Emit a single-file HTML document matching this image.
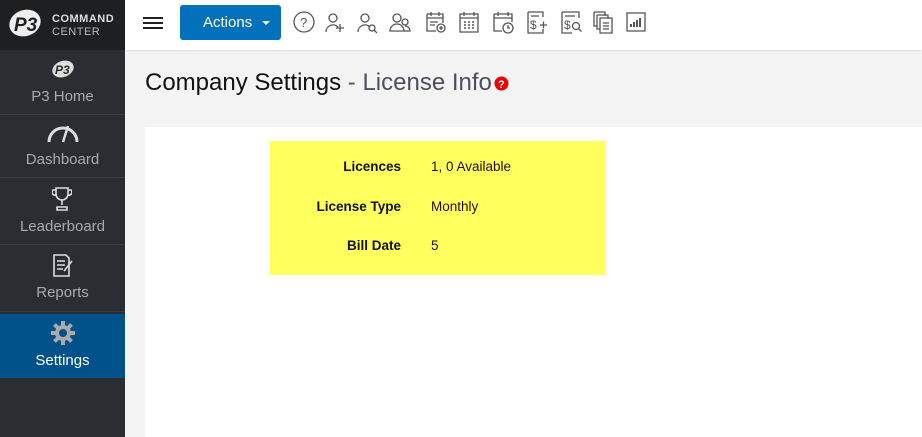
<!DOCTYPE html>
<html><head><meta charset="utf-8"><style>
*{margin:0;padding:0;box-sizing:border-box}
body{width:922px;height:437px;overflow:hidden;font-family:"Liberation Sans",sans-serif;background:#f4f4f4;position:relative}
.logo{position:absolute;left:0;top:0;width:125px;height:50px;background:#1e1f21}
.side{position:absolute;left:0;top:50px;width:125px;height:387px;background:#2a2d31}
.item{position:absolute;left:0;width:125px;text-align:center;color:#a9abad;font-size:15px;border-bottom:1px solid #3a3d41}
.item span{position:absolute;left:0;width:125px;text-align:center}
.top{position:absolute;left:125px;top:0;width:797px;height:50px;background:#fff;box-shadow:0 1px 2px rgba(0,0,0,.08)}
.btn{position:absolute;left:180px;top:5px;width:101px;height:35px;background:#0270bb;border-radius:3px;color:#fff;font-size:15px;line-height:35px;padding-left:23px}
.panel{position:absolute;left:145px;top:127px;width:777px;height:310px;background:#fff}
.yb{position:absolute;left:270px;top:141px;width:336px;height:134px;background:#ffff5e;font-size:13.5px;color:#111}
.lab{position:absolute;right:205px;font-weight:bold;text-align:right}
.val{position:absolute;left:161px;color:#2a0a18}
</style></head><body>
<div class="logo">
<svg width="125" height="50" style="position:absolute;left:0;top:0">
<ellipse cx="25" cy="23" rx="16" ry="13" fill="#eee" transform="rotate(-20 25 23)"/>
<text x="14" y="31" font-size="19" font-style="italic" font-weight="bold" fill="#1e1f21" font-family="Liberation Sans">P3</text>
<text x="52" y="22" font-size="11" font-weight="bold" fill="#ddd" font-family="Liberation Sans" letter-spacing="0.5">COMMAND</text>
<text x="52" y="35" font-size="11" fill="#bbb" font-family="Liberation Sans" letter-spacing="0.5">CENTER</text>
</svg></div>
<div class="side">
<div class="item" style="top:0;height:65px">
<svg width="24" height="20" style="position:absolute;left:51px;top:9px"><ellipse cx="12" cy="10" rx="11" ry="8" fill="#ddd" transform="rotate(-20 12 10)"/><text x="4" y="15" font-size="12" font-style="italic" font-weight="bold" fill="#2a2d31">P3</text></svg>
<span style="top:38px">P3 Home</span></div>
<div class="item" style="top:65px;height:63px">
<svg width="34" height="22" style="position:absolute;left:46px;top:7px" fill="none" stroke="#ddd" stroke-width="3"><path d="M3 20 A14 14 0 0 1 31 20"/><path d="M17 20 L22 4" stroke-width="2.5"/></svg>
<span style="top:36px">Dashboard</span></div>
<div class="item" style="top:128px;height:67px">
<svg width="20" height="26" style="position:absolute;left:52px;top:8px" fill="none" stroke="#ddd" stroke-width="1.6"><path d="M4 2h12v6a6 6 0 0 1-12 0z M4 4H1a3 3 0 0 0 3 5 M16 4h3a3 3 0 0 1-3 5 M10 14v5 M5 24h10v-3H5z"/></svg>
<span style="top:40px">Leaderboard</span></div>
<div class="item" style="top:195px;height:67px">
<svg width="24" height="26" style="position:absolute;left:51px;top:8px" fill="none" stroke="#ddd" stroke-width="1.6"><path d="M3 2h12l3 3v18H3z M6 8h8 M6 12h8 M6 16h6 M13 18l8-10"/></svg>
<span style="top:39px">Reports</span></div>
<div style="position:absolute;top:264px;left:0;width:125px;height:64px;background:#01528a;color:#fff;font-size:15px;text-align:center">
<svg width="26" height="26" viewBox="0 0 26 26" style="position:absolute;left:50px;top:6px"><g fill="#aaa"><circle cx="13" cy="13" r="8"/><g stroke="#aaa" stroke-width="4"><path d="M13 1v24 M1 13h24 M4.5 4.5l17 17 M21.5 4.5l-17 17"/></g></g><circle cx="13" cy="13" r="4" fill="#01528a"/></svg>
<span style="position:absolute;top:38px;left:0;width:125px">Settings</span></div>
</div>
<div class="top"></div>
<svg width="22" height="14" style="position:absolute;left:142px;top:16px"><path d="M1 2h20M1 7h20M1 12h20" stroke="#222" stroke-width="2"/></svg>
<div class="btn">Actions <span style="display:inline-block;margin-left:6px;border-left:4px solid transparent;border-right:4px solid transparent;border-top:4px solid #fff;vertical-align:middle"></span></div>
<svg width="400" height="30" style="position:absolute;left:290px;top:8px" fill="none" stroke="#555" stroke-width="1.3">
<circle cx="14" cy="14" r="10"/><text x="10" y="19" font-size="13" fill="#555" stroke="none">?</text>
<g transform="translate(36,4)"><circle cx="7" cy="6" r="4"/><path d="M0 20a7 7 0 0 1 12-5 M10 16h8 M14 12v8"/></g>
<g transform="translate(68,4)"><circle cx="7" cy="6" r="4"/><path d="M0 20a7 7 0 0 1 12-5"/><circle cx="14" cy="16" r="3"/><path d="M16 18l3 3"/></g>
<g transform="translate(100,4)"><circle cx="7" cy="6" r="4"/><path d="M0 19a7 7 0 0 1 14 0z"/><circle cx="15" cy="10" r="3"/><path d="M14 19h6a5 5 0 0 0-5-5"/></g>
<g transform="translate(136,3)"><path d="M1 3h16v9 M1 3v17h9 M1 7h16 M5 1v4 M13 1v4 M4 11h8 M4 14h5"/><circle cx="15" cy="17" r="4"/><path d="M13 17h4 M15 15v4"/></g>
<g transform="translate(169,3)"><path d="M1 3h18v18H1z M1 7h18 M5 1v4 M15 1v4"/><path d="M5 11h2M9 11h2M13 11h2M5 14h2M9 14h2M13 14h2M5 17h2M9 17h2M13 17h2" stroke-width="1.6"/></g>
<g transform="translate(203,3)"><path d="M1 3h18v8 M1 3v17h8 M1 7h18 M5 1v4 M15 1v4"/><circle cx="15" cy="17" r="5"/><path d="M15 14v3h2"/></g>
<g transform="translate(237,3)"><path d="M1 1h15v5 M1 1v21h15v-4 M4 5h8"/><text x="3" y="18" font-size="12" fill="#555" stroke="none">$</text><path d="M13 14h7 M16.5 10.5v7"/></g>
<g transform="translate(271,3)"><path d="M1 1h17v6 M1 1v21h10 M4 5h10"/><text x="3" y="18" font-size="12" fill="#555" stroke="none">$</text><circle cx="15" cy="15" r="3.5"/><path d="M17.5 17.5l3 3"/></g>
<g transform="translate(303,3)"><path d="M1 1h11v4 M4 4h11v4 M1 1v14h3 M4 4v14h3"/><path d="M7 7h12v15H7z M10 12h6M10 15h6M10 18h6"/></g>
<g transform="translate(336,4)"><path d="M1 1h18v18H1z"/><path d="M5 15v-3 M8 15v-5 M11 15v-7 M14 15v-9" stroke-width="2"/></g>
</svg>
<div style="position:absolute;left:145px;top:69px;font-size:24px;color:#111;font-family:'Liberation Sans',sans-serif">Company Settings <span style="color:#555">- </span><span style="color:#4a5060">License Info</span><svg width="15" height="15" style="vertical-align:-1px;margin-left:2px"><circle cx="7.5" cy="7.5" r="7" fill="#e00"/><text x="4" y="12" font-size="11" font-weight="bold" fill="#fff">?</text></svg></div>
<div class="panel"></div>
<div class="yb">
<div class="lab" style="top:18px">Licences</div><div class="val" style="top:18px">1, 0 Available</div>
<div class="lab" style="top:58px">License Type</div><div class="val" style="top:58px">Monthly</div>
<div class="lab" style="top:97px">Bill Date</div><div class="val" style="top:97px">5</div>
</div>
</body></html>
